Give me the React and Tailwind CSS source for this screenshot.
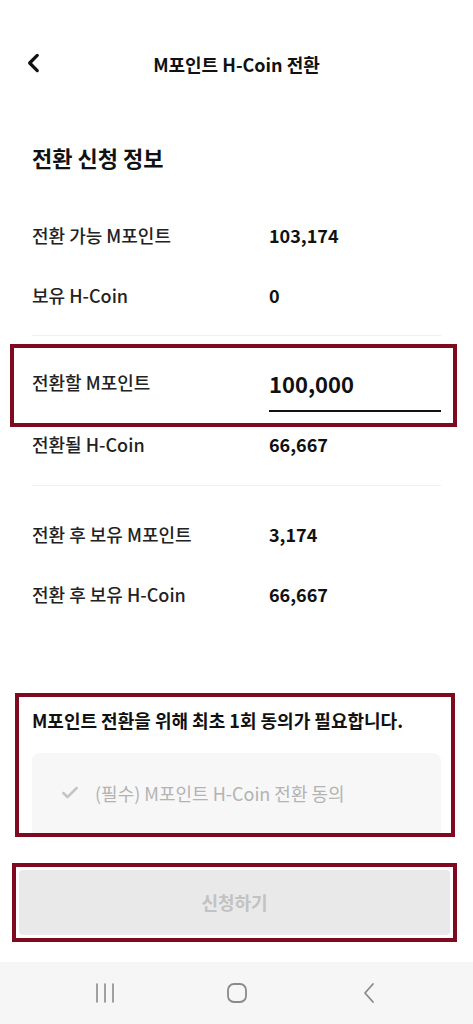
import { Check } from "lucide-react";

const font = { fontFamily: '"Noto Sans CJK KR", "Noto Sans", sans-serif' };

const InfoRow = ({ label, value, h = "h-[60px]" }) => (
  <div className={`flex items-center ${h} px-8`}>
    <div className="w-[237px] text-[18px] font-medium text-[#222]">{label}</div>
    <div className="text-[18px] font-bold text-[#111]">{value}</div>
  </div>
);

export default function App() {
  return (
    <div className="w-[473px] h-[1024px] bg-white flex flex-col" style={font}>
      {/* header */}
      <div className="relative h-[128px] flex items-center justify-center">
        <button className="absolute left-[21px] top-[50px]">
          <svg width="26" height="26" viewBox="0 0 24 24" fill="none">
            <path d="M15 5 L8 12 L15 19" stroke="#111" strokeWidth="3" strokeLinecap="round" strokeLinejoin="round" />
          </svg>
        </button>
        <h1 className="text-[18px] font-bold text-[#111]">M포인트 H-Coin 전환</h1>
      </div>

      <h2 className="px-8 pt-[14px] pb-[33px] text-[22px] leading-[30px] font-bold text-[#111]">전환 신청 정보</h2>

      <InfoRow label="전환 가능 M포인트" value="103,174" />
      <InfoRow label="보유 H-Coin" value="0" />
      <div className="mx-8 mt-[10px] h-px bg-[#f0f0f0]" />

      {/* input row */}
      <div className="ml-[10px] mr-[16px] mt-[8px] border-4 border-[#7d0a1e] pl-[18px] pr-[12px]">
        <div className="flex items-center h-[75px]">
          <div className="w-[237px] mb-[6px] text-[18px] font-medium text-[#222]">전환할 M포인트</div>
          <div className="flex-1 h-full flex flex-col justify-end pb-[11px]">
            <div className="pb-[12px] border-b-2 border-[#111] text-[22px] leading-[30px] font-bold text-[#111]">100,000</div>
          </div>
        </div>
      </div>
      <InfoRow label="전환될 H-Coin" value="66,667" h="h-[34px]" />
      <div className="mx-8 mt-[24px] h-px bg-[#f0f0f0]" />
      <div className="mt-[18px]">
        <InfoRow label="전환 후 보유 M포인트" value="3,174" />
        <InfoRow label="전환 후 보유 H-Coin" value="66,667" />
      </div>

      {/* agreement */}
      <div className="ml-[15px] mr-[18px] mt-[69px] border-4 border-[#7d0a1e] pl-[13px] pr-[10px] pt-[11px]">
        <p className="text-[18px] leading-[24px] font-bold text-[#111] whitespace-nowrap">M포인트 전환을 위해 최초 1회 동의가 필요합니다.</p>
        <div className="mt-[21px] h-[80px] rounded-t-lg bg-[#f7f7f7] flex items-center pl-[28px] gap-[15px]">
          <Check size={20} strokeWidth={3} className="text-[#c4c4c4]" />
          <span className="text-[18px] text-[#b3b3b3]">(필수) M포인트 H-Coin 전환 동의</span>
        </div>
      </div>

      {/* submit */}
      <div className="ml-[12px] mr-[16px] mt-[26px] border-4 border-[#7d0a1e] p-[3px] bg-white">
        <button className="w-full h-[65px] rounded-sm bg-[#e9e9e9] text-[18px] font-bold text-[#c2c2c2]">신청하기</button>
      </div>

      {/* system nav */}
      <div className="mt-auto h-[62px] bg-[#f6f6f6] flex items-center justify-center gap-[110px]">
        <svg width="22" height="22" viewBox="0 0 22 22" fill="none" stroke="#8a8a8a" strokeWidth="1.6" strokeLinecap="round">
          <path d="M3 2 V20 M11 2 V20 M19 2 V20" />
        </svg>
        <svg width="22" height="22" viewBox="0 0 22 22" fill="none" stroke="#8a8a8a" strokeWidth="1.8">
          <rect x="2" y="2" width="18" height="18" rx="6" />
        </svg>
        <svg width="22" height="22" viewBox="0 0 22 22" fill="none" stroke="#8a8a8a" strokeWidth="1.8" strokeLinecap="round" strokeLinejoin="round">
          <path d="M15 2 L7 11 L15 20" />
        </svg>
      </div>
    </div>
  );
}
